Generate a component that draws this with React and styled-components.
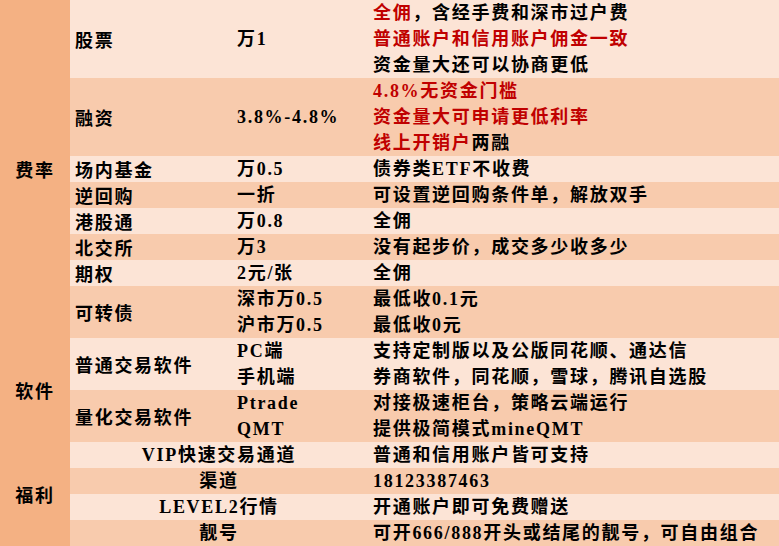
import styled, { createGlobalStyle } from "styled-components";

const GlobalStyle = createGlobalStyle`
  html, body {
    margin: 0;
    padding: 0;
    background: #ffffff;
  }
`;

const tones = {
  head: "#F4B183",
  light: "#FCE4D6",
  dark: "#F8CBAD",
};

const feeRows = [
  {
    name: "股票",
    price: ["万1"],
    notes: [
      [{ t: "全佣", red: true }, { t: "，含经手费和深市过户费" }],
      [{ t: "普通账户和信用账户佣金一致", red: true }],
      [{ t: "资金量大还可以协商更低" }],
    ],
  },
  {
    name: "融资",
    price: ["3.8%-4.8%"],
    notes: [
      [{ t: "4.8%无资金门槛", red: true }],
      [{ t: "资金量大可申请更低利率", red: true }],
      [{ t: "线上开销户", red: true }, { t: "两融" }],
    ],
  },
  { name: "场内基金", price: ["万0.5"], notes: [[{ t: "债券类ETF不收费" }]] },
  { name: "逆回购", price: ["一折"], notes: [[{ t: "可设置逆回购条件单，解放双手" }]] },
  { name: "港股通", price: ["万0.8"], notes: [[{ t: "全佣" }]] },
  { name: "北交所", price: ["万3"], notes: [[{ t: "没有起步价，成交多少收多少" }]] },
  { name: "期权", price: ["2元/张"], notes: [[{ t: "全佣" }]] },
  {
    name: "可转债",
    price: ["深市万0.5", "沪市万0.5"],
    notes: [[{ t: "最低收0.1元" }], [{ t: "最低收0元" }]],
  },
];

const softRows = [
  {
    name: "普通交易软件",
    price: ["PC端", "手机端"],
    notes: [
      [{ t: "支持定制版以及公版同花顺、通达信" }],
      [{ t: "券商软件，同花顺，雪球，腾讯自选股" }],
    ],
  },
  {
    name: "量化交易软件",
    price: ["Ptrade", "QMT"],
    notes: [[{ t: "对接极速柜台，策略云端运行" }], [{ t: "提供极简模式mineQMT" }]],
  },
];

const perkRows = [
  { name: "VIP快速交易通道", note: "普通和信用账户皆可支持" },
  { name: "渠道", note: "18123387463" },
  { name: "LEVEL2行情", note: "开通账户即可免费赠送" },
  { name: "靓号", note: "可开666/888开头或结尾的靓号，可自由组合" },
];

const Sheet = styled.table`
  width: 779px;
  border-collapse: collapse;
  table-layout: fixed;
  font-family: "Liberation Serif", "Noto Sans CJK SC", serif;
  font-size: 18px;
  font-weight: 700;
  letter-spacing: 1.7px;
  color: #000000;
`;

const Col = styled.col`
  width: ${({ $w }) => $w}px;
`;

const Cell = styled.td`
  padding: 0 5px;
  background: ${({ $tone }) => tones[$tone]};
  text-align: ${({ $center }) => ($center ? "center" : "left")};
  vertical-align: middle;
  white-space: nowrap;
  overflow: hidden;
`;

const Line = styled.div`
  height: 26px;
  line-height: 26px;
`;

const Mark = styled.span`
  color: ${({ $red }) => ($red ? "#C00000" : "#000000")};
`;

const Lines = ({ items }) =>
  items.map((text, i) => <Line key={i}>{text}</Line>);

const NoteLines = ({ notes }) =>
  notes.map((parts, i) => (
    <Line key={i}>
      {parts.map((p, j) => (
        <Mark key={j} $red={p.red}>
          {p.t}
        </Mark>
      ))}
    </Line>
  ));

const DetailRow = ({ row, tone, head }) => (
  <tr>
    {head}
    <Cell $tone={tone}>{row.name}</Cell>
    <Cell $tone={tone}>
      <Lines items={row.price} />
    </Cell>
    <Cell $tone={tone}>
      <NoteLines notes={row.notes} />
    </Cell>
  </tr>
);

const toneAt = (i) => (i % 2 === 0 ? "light" : "dark");

export default function App() {
  return (
    <>
      <GlobalStyle />
      <Sheet>
        <colgroup>
          <Col $w={70} />
          <Col $w={162} />
          <Col $w={136} />
          <Col $w={411} />
        </colgroup>
        <tbody>
          {feeRows.map((row, i) => (
            <DetailRow
              key={row.name}
              row={row}
              tone={toneAt(i)}
              head={
                i === 0 ? (
                  <Cell $tone="head" $center rowSpan={feeRows.length}>
                    费率
                  </Cell>
                ) : null
              }
            />
          ))}
          {softRows.map((row, i) => (
            <DetailRow
              key={row.name}
              row={row}
              tone={toneAt(feeRows.length + i)}
              head={
                i === 0 ? (
                  <Cell $tone="head" $center rowSpan={softRows.length}>
                    软件
                  </Cell>
                ) : null
              }
            />
          ))}
          {perkRows.map((row, i) => {
            const tone = toneAt(feeRows.length + softRows.length + i);
            return (
              <tr key={row.name}>
                {i === 0 ? (
                  <Cell $tone="head" $center rowSpan={perkRows.length}>
                    福利
                  </Cell>
                ) : null}
                <Cell $tone={tone} $center colSpan={2}>
                  <Line>{row.name}</Line>
                </Cell>
                <Cell $tone={tone}>
                  <Line>{row.note}</Line>
                </Cell>
              </tr>
            );
          })}
        </tbody>
      </Sheet>
    </>
  );
}
